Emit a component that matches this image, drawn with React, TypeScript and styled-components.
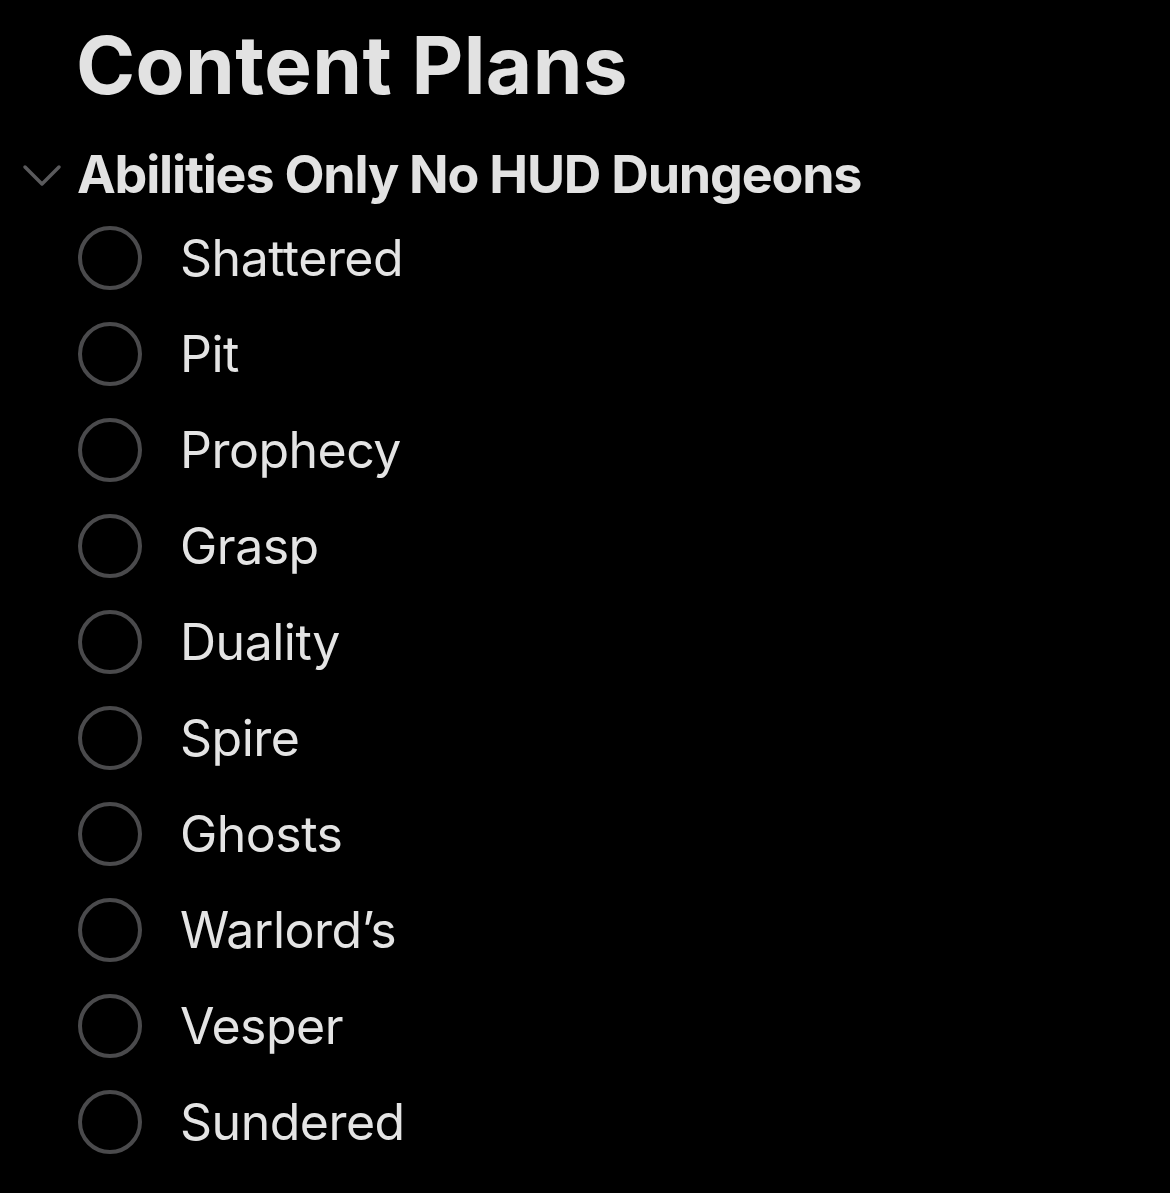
import styled, { createGlobalStyle } from "styled-components";

const GlobalStyle = createGlobalStyle`
  html, body {
    margin: 0;
    padding: 0;
    background: #000;
  }
  body {
    font-family: Inter, "Noto Sans", "Liberation Sans", sans-serif;
    color: #e4e4e4;
  }
`;

const Page = styled.div`
  width: 1170px;
  height: 1193px;
  background: #000;
  overflow: hidden;
  display: flex;
  flex-direction: column;
  padding-top: 17px;
  box-sizing: border-box;
`;

const Title = styled.h1`
  margin: 0 0 0 76px;
  font-size: 80px;
  line-height: 96px;
  font-weight: 700;
  letter-spacing: 0.4px;
  color: #e2e2e2;
`;

const SectionHeader = styled.div`
  display: flex;
  align-items: center;
  margin-top: 31px;
  padding-left: 22px;
`;

const Chevron = styled.span`
  display: flex;
  width: 55px;
  align-items: center;
  justify-content: flex-start;
  margin-top: 2px;
`;

const SectionTitle = styled.h2`
  margin: 0;
  font-size: 52px;
  line-height: 62px;
  font-weight: 700;
  letter-spacing: -1.2px;
  color: #e2e2e2;
`;

const List = styled.ul`
  list-style: none;
  margin: 4px 0 0;
  padding: 0 0 0 78px;
  display: flex;
  flex-direction: column;
`;

const Row = styled.li`
  display: flex;
  align-items: center;
  height: 96px;
  gap: 38px;
`;

const Check = styled.span`
  width: 64px;
  height: 64px;
  box-sizing: border-box;
  border-radius: 50%;
  border: 4px solid #4a4a4c;
  flex-shrink: 0;
`;

const Label = styled.span`
  font-size: 50px;
  line-height: 96px;
  font-weight: 400;
  letter-spacing: -0.5px;
  color: #e4e4e4;
`;

const items = [
  "Shattered",
  "Pit",
  "Prophecy",
  "Grasp",
  "Duality",
  "Spire",
  "Ghosts",
  "Warlord’s",
  "Vesper",
  "Sundered",
];

const App = () => {
  return (
    <Page>
      <GlobalStyle />
      <Title>Content Plans</Title>
      <SectionHeader>
        <Chevron>
          <svg width="40" height="24" viewBox="0 0 40 24" fill="none">
            <path
              d="M3 3 L20 20 L37 3"
              stroke="#5a5a5c"
              strokeWidth="3.5"
              strokeLinecap="round"
              strokeLinejoin="round"
            />
          </svg>
        </Chevron>
        <SectionTitle>Abilities Only No HUD Dungeons</SectionTitle>
      </SectionHeader>
      <List>
        {items.map((item) => (
          <Row key={item}>
            <Check />
            <Label>{item}</Label>
          </Row>
        ))}
      </List>
    </Page>
  );
};

export default App;
